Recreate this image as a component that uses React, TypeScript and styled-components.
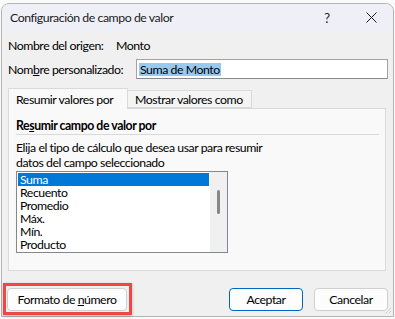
import React from 'react'
import styled, { createGlobalStyle } from 'styled-components'

const GlobalStyle = createGlobalStyle`
  html, body { margin: 0; padding: 0; background: #fafafa; }
  body {
    font-family: Lato, "Noto Sans", sans-serif;
    font-size: 12.3px;
    letter-spacing: -0.45px;
    color: #000;
    white-space: nowrap;
  }
  * { box-sizing: border-box; }
`

const Screen = styled.div`
  width: 395px;
  height: 319px;
  padding: 3px 0 0 1px;
  background: #fafafa;
`

const Window = styled.div`
  position: relative;
  width: 393px;
  height: 314px;
  display: flex;
  flex-direction: column;
  border: 1px solid #b4b4b4;
  border-radius: 8px 8px 0 0;
  background: #f0f0f0;
`

const TitleBar = styled.div`
  height: 27px;
  display: flex;
  align-items: center;
  padding-left: 8px;
  background: #eff0f7;
  color: #1b1b1b;
  border-radius: 7px 7px 0 0;
`

const Title = styled.div`
  flex: 1;
  line-height: 27px;
`

const TitleButton = styled.div`
  width: 44px;
  height: 27px;
  display: flex;
  align-items: center;
  justify-content: center;
  font-size: 13px;
  color: #1b1b1b;
`

const Body = styled.div`
  flex: 1;
  display: flex;
  flex-direction: column;
  padding: 0 5px 0 6px;
`

const Row = styled.div<{ $h: number; $top: number }>`
  height: ${p => p.$h}px;
  margin-top: ${p => p.$top}px;
  display: flex;
  align-items: center;
  gap: 9px;
`

const Label = styled.span<{ $w: number }>`
  min-width: ${p => p.$w}px;
`

const TextInput = styled.div`
  flex: 1;
  height: 20px;
  display: flex;
  align-items: center;
  padding-left: 2px;
  background: #fff;
  border: 1px solid #a3a3a3;
  border-bottom-color: #8a8a8a;
`

const Selection = styled.span`
  background: #99c9ef;
  line-height: 13px;
  padding: 0 1px;
`

const TabStrip = styled.div`
  margin-top: 8px;
  height: 20px;
  display: flex;
  align-items: flex-end;
  position: relative;
  z-index: 1;
`

const Tab = styled.div<{ $active?: boolean; $w: number }>`
  width: ${p => p.$w}px;
  height: ${p => (p.$active ? 21 : 18)}px;
  margin-bottom: ${p => (p.$active ? -1 : 0)}px;
  margin-left: ${p => (p.$active ? 0 : -1)}px;
  padding-left: 7px;
  display: flex;
  align-items: center;
  background: ${p => (p.$active ? '#f9f9f9' : '#f4f4f4')};
  border: 1px solid #dadada;
  border-bottom: ${p => (p.$active ? 'none' : '1px solid #dadada')};
`

const Panel = styled.div`
  height: 163px;
  margin-right: 2px;
  padding: 8px 6px 0 7px;
  background: #f9f9f9;
  border: 1px solid #dadada;
  display: flex;
  flex-direction: column;
`

const Heading = styled.div`
  font-weight: 700;
  line-height: 17px;
  border-bottom: 1px solid #d9d9d9;
`

const Description = styled.div`
  margin-top: 5px;
  line-height: 15px;
`

const ListBox = styled.div`
  margin-top: 1px;
  width: 212px;
  height: 82px;
  display: flex;
  background: #fff;
  border: 1px solid #828790;
`

const Items = styled.div`
  flex: 1;
  padding: 1px;
`

const Item = styled.div<{ $selected?: boolean }>`
  height: 13px;
  line-height: 13px;
  padding-left: 2px;
  background: ${p => (p.$selected ? '#0078d7' : 'transparent')};
  color: ${p => (p.$selected ? '#fff' : '#000')};
`

const ScrollTrack = styled.div`
  width: 17px;
  background: #f0f0f0;
  padding: 18px 0 0 7px;
`

const ScrollThumb = styled.div`
  width: 3px;
  height: 24px;
  border-radius: 2px;
  background: #868686;
`

const Footer = styled.div`
  margin-top: 17px;
  display: flex;
  gap: 11px;
`

const Button = styled.div<{ $primary?: boolean; $w: number }>`
  width: ${p => p.$w}px;
  height: 23px;
  display: flex;
  align-items: center;
  justify-content: center;
  background: #fdfdfd;
  border: 1px solid ${p => (p.$primary ? '#0067c0' : '#d0d0d0')};
  border-radius: 4px;
`

/* red annotation box drawn over the first button */
const Marked = styled(Button)`
  position: relative;
  margin-left: -1px;
  margin-right: auto;
  &::after {
    content: '';
    position: absolute;
    left: -5px;
    top: -6px;
    right: -6px;
    bottom: -5px;
    border: 3px solid #ef4646;
    box-shadow: 0 1px 3px rgba(0, 0, 0, 0.25);
  }
`

const Grip = styled.svg`
  position: absolute;
  right: 1px;
  bottom: 1px;
`

function CloseIcon() {
  return (
    <svg width="11" height="11" viewBox="0 0 11 11">
      <path d="M0.5 0.5 L10.5 10.5 M10.5 0.5 L0.5 10.5" stroke="#1b1b1b" strokeWidth="1" />
    </svg>
  )
}

const options = ['Suma', 'Recuento', 'Promedio', 'Máx.', 'Mín.', 'Producto']

export default function App() {
  return (
    <Screen>
      <GlobalStyle />
      <Window>
        <TitleBar>
          <Title>Configuración de campo de valor</Title>
          <TitleButton>?</TitleButton>
          <TitleButton>
            <CloseIcon />
          </TitleButton>
        </TitleBar>
        <Body>
          <Row $h={24} $top={2}>
            <Label $w={99}>Nombre del origen:</Label>
            <span>Monto</span>
          </Row>
          <Row $h={22} $top={1}>
            <Label $w={119}>
              Nom<u>b</u>re personalizado:
            </Label>
            <TextInput>
              <Selection>Suma de Monto</Selection>
            </TextInput>
          </Row>
          <TabStrip>
            <Tab $active $w={120}>Resumir valores por</Tab>
            <Tab $w={125}>Mostrar valores como</Tab>
          </TabStrip>
          <Panel>
            <Heading>
              Re<u>s</u>umir campo de valor por
            </Heading>
            <Description>
              Elija el tipo de cálculo que desea usar para resumir
              <br />
              datos del campo seleccionado
            </Description>
            <ListBox>
              <Items>
                {options.map((o, i) => (
                  <Item key={o} $selected={i === 0}>
                    {o}
                  </Item>
                ))}
              </Items>
              <ScrollTrack>
                <ScrollThumb />
              </ScrollTrack>
            </ListBox>
          </Panel>
          <Footer>
            <Marked $w={120}>
              Formato de&nbsp;<u>n</u>úmero
            </Marked>
            <Button $w={74} $primary>Aceptar</Button>
            <Button $w={74}>Cancelar</Button>
          </Footer>
        </Body>
        <Grip width="8" height="8" viewBox="0 0 8 8">
          <path d="M7 1 L1 7 M7 4 L4 7" stroke="#bdbdbd" strokeWidth="1" strokeDasharray="1 1" />
        </Grip>
      </Window>
    </Screen>
  )
}
